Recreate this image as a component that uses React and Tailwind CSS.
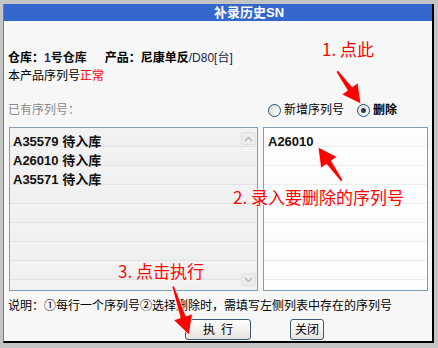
import React from "react";

const font = { fontFamily: '"Liberation Sans", "Noto Sans CJK SC", sans-serif' };
const handFont = { fontFamily: '"Noto Sans CJK SC", sans-serif' };

// red arrow polygon from tail to tip
function arrowPoints(tx, ty, hx, hy, shaft = 3, headLen = 19, headW = 10) {
  const dx = hx - tx;
  const dy = hy - ty;
  const len = Math.hypot(dx, dy);
  const ux = dx / len;
  const uy = dy / len;
  const px = -uy;
  const py = ux;
  const bx = hx - ux * headLen;
  const by = hy - uy * headLen;
  const pts = [
    [tx + px * shaft * 0.4, ty + py * shaft * 0.4],
    [bx + px * shaft, by + py * shaft],
    [bx + px * headW, by + py * headW],
    [hx, hy],
    [bx - px * headW, by - py * headW],
    [bx - px * shaft, by - py * shaft],
    [tx - px * shaft * 0.4, ty - py * shaft * 0.4],
  ];
  return pts.map((p) => p.join(",")).join(" ");
}

function Radio({ checked }) {
  return (
    <span className="w-[13px] h-[13px] rounded-full border border-[#1c5180] bg-gradient-to-br from-[#dcdcd5] to-white flex items-center justify-center">
      {checked && <span className="w-[5px] h-[5px] rounded-full bg-[#2d3c4a]" />}
    </span>
  );
}

function Note({ children, className }) {
  return (
    <div
      className={`absolute text-[17px] leading-none text-[#ff0000] whitespace-nowrap [text-shadow:0_0_2px_#fff,0_0_2px_#fff] ${className}`}
      style={handFont}
    >
      {children}
    </div>
  );
}

export default function App() {
  const rows = ["A35579", "A26010", "A35571"];
  return (
    <div className="w-[438px] h-[348px] bg-[#c4c4c4] pt-[4px] pl-[3px] pr-[4px] pb-[5px]" style={font}>
      <div className="relative h-full flex flex-col bg-[#f7f7f7] border-l border-[#7a7a7a] border-r-2 border-b-2 border-r-black border-b-black">
        {/* title */}
        <div className="h-[17px] bg-[#3467ce] text-white font-bold text-[13px] leading-[17px] pl-[210px]">
          补录历史SN
        </div>

        <div className="flex flex-col px-[4px] text-[12px] text-black">
          <div className="h-[28px]" />
          <div className="h-[18px] flex items-center whitespace-nowrap">
            <span className="font-bold">仓库：</span>
            <span className="font-bold text-[#111]">
              <span className="text-[#1a2a8c]">1</span>号仓库
            </span>
            <span className="font-bold ml-[18px]">产品：</span>
            <span className="font-bold">尼康单反</span>
            <span className="text-[#222244]">/D80[台]</span>
          </div>
          <div className="h-[18px] flex items-center">
            本产品序列号<span className="text-[#ff0000]">正常</span>
          </div>
          <div className="h-[16px]" />
          <div className="h-[18px] flex items-center">
            <span className="text-[#8a8a8a]">已有序列号：</span>
            <div className="ml-auto mr-[31px] flex items-center gap-[2px]">
              <Radio />
              <span className="ml-[1px]">新增序列号</span>
              <span className="w-[9px]" />
              <Radio checked />
              <span className="ml-[1px] font-bold">删除</span>
            </div>
          </div>
          <div className="h-[8px]" />

          {/* lists */}
          <div className="flex gap-[5px] h-[164px]">
            <div className="w-[249px] ml-[1px] flex border border-[#7f9db9] bg-[repeating-linear-gradient(to_bottom,#f3f3f3_0px,#efefef_18px,#e2e2e2_18px,#e2e2e2_19px)]">
              <div className="flex-1 pt-[4px] pl-[3px] font-bold text-[13px] text-[#111]">
                {rows.map((r) => (
                  <div key={r} className="h-[19px] leading-[19px]">
                    {r} 待入库
                  </div>
                ))}
              </div>
              <div className="w-[16px] flex flex-col justify-between py-[4px] pr-[1px]">
                <div className="h-[13px] w-[15px] rounded-[2px] bg-[#ececec] border border-[#e0e0e0] flex items-center justify-center">
                  <svg width="9" height="6" viewBox="0 0 9 6">
                    <path d="M1 5 L4.5 1.5 L8 5" fill="none" stroke="#b8b8b8" strokeWidth="1.5" />
                  </svg>
                </div>
                <div className="h-[13px] w-[15px] rounded-[2px] bg-[#ececec] border border-[#e0e0e0] flex items-center justify-center">
                  <svg width="9" height="6" viewBox="0 0 9 6">
                    <path d="M1 1 L4.5 4.5 L8 1" fill="none" stroke="#b8b8b8" strokeWidth="1.5" />
                  </svg>
                </div>
              </div>
            </div>
            <div className="flex-1 border border-[#7f9db9] bg-[repeating-linear-gradient(to_bottom,#ffffff_0px,#fbfbfb_18px,#ececec_18px,#ececec_19px)] pt-[4px] pl-[4px] font-bold text-[13px] text-[#111]">
              <div className="h-[19px] leading-[19px]">A26010</div>
            </div>
          </div>

          <div className="h-[27px] flex items-center mt-[1px] whitespace-nowrap">
            说明：①每行一个序列号②选择删除时，需填写左侧列表中存在的序列号
          </div>
          <div className="flex items-center h-[21px]">
            <button className="ml-[177px] w-[66px] h-[21px] rounded-[3px] border border-[#3c5a7a] bg-gradient-to-b from-white to-[#e6e3dc] text-[12px] tracking-[6px] pl-[6px]">
              执行
            </button>
            <button className="ml-[39px] w-[34px] h-[21px] rounded-[3px] border border-[#3c5a7a] bg-gradient-to-b from-white to-[#e6e3dc] text-[12px]">
              关闭
            </button>
          </div>
        </div>

        {/* annotations */}
        <Note className="left-[318px] top-[36px]">1. 点此</Note>
        <Note className="left-[229px] top-[184px]">2. 录入要删除的序列号</Note>
        <Note className="left-[114px] top-[258px]">3. 点击执行</Note>
        <svg className="absolute left-0 top-0 pointer-events-none" width="431" height="340" viewBox="0 0 431 340">
          <g fill="#ff0000" stroke="#ffffff" strokeWidth="0.8">
            <polygon points={arrowPoints(333, 67, 357, 100)} />
            <polygon points={arrowPoints(338, 177, 314, 143)} />
            <polygon points={arrowPoints(169, 282, 185, 331)} />
          </g>
        </svg>
      </div>
    </div>
  );
}
